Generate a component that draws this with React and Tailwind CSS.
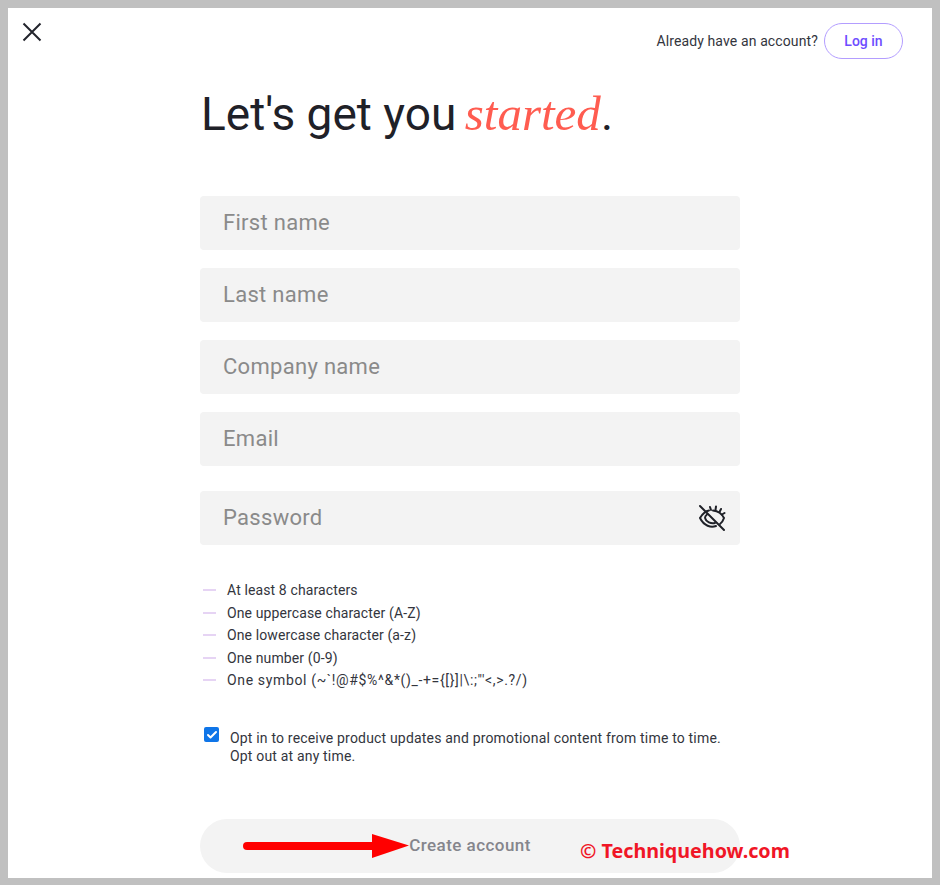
import React from 'react';
import { Check } from 'lucide-react';

const sans = 'font-["Roboto","Liberation_Sans",sans-serif]';

const fields = ['First name', 'Last name', 'Company name', 'Email'];

const rules = [
  'At least 8 characters',
  'One uppercase character (A-Z)',
  'One lowercase character (a-z)',
  'One number (0-9)',
  'One symbol (~`!@#$%^&*()_-+={[}]|\\:;"\'<,>.?/)',
];

function Field({ label, children }) {
  return (
    <div className="flex h-[54px] items-center justify-between rounded-[4px] bg-[#f3f3f3] pl-[23px] pr-[13px] text-[22px] tracking-[0.3px] text-[#8a8a8a]">
      <span className="mb-[2px]">{label}</span>
      {children}
    </div>
  );
}

function EyeOff() {
  return (
    <svg width="30" height="30" viewBox="0 0 30 30" fill="none" stroke="#1f2128" strokeWidth="2" strokeLinecap="round">
      <path d="M3 3 L27 27" />
      <path d="M3 15 C6 10 9 8 12 7.5 M16 7.5 C21 8 25 11 27 15 C26 18 24.5 20 23 21 M19 23 C14 25 7 23 3 15" />
      <path d="M8 15 C9 19 14 21 18 20 M10 11.5 C8.500 12.500 8 14 8 15" />
      <path d="M13 4 L14 7 M19 3.500 L18.500 7 M24 6 L22.500 9 M27.500 10 L25 11.500" />
    </svg>
  );
}

export default function App() {
  return (
    <div className={`${sans} h-[885px] w-[940px] overflow-hidden bg-[#c0c0c0] pb-[7px] pl-2 pr-2 pt-2`}>
      <div className="relative h-full bg-white">
        {/* Top bar */}
        <div className="flex items-start justify-between pl-[14px] pr-[29px] pt-[15px]">
          <svg width="20" height="20" viewBox="0 0 20 20" className="mt-[-1px]" fill="none" stroke="#22242c" strokeWidth="2">
            <path d="M1.500 1.500 L18.500 18.500 M18.500 1.500 L1.500 18.500" />
          </svg>
          <div className="flex items-center gap-[6px]">
            <span className="text-[14px] tracking-[0.12px] text-[#33353d]">Already have an account?</span>
            <button className="h-[36px] w-[79px] rounded-full border border-[#b39dff] text-[14px] font-medium text-[#6e4dff]">
              Log in
            </button>
          </div>
        </div>

        {/* Form */}
        <div className="ml-[192px] w-[540px]">
          <h1 className="ml-px mt-[20px] h-[70px] text-[46px] leading-[70px] text-[#1f2128]">
            Let's get you{' '}
            <span className="ml-[-3px] font-['Liberation_Serif',serif] text-[49px] italic text-[#ff5c50]">started</span>.
          </h1>

          <div className="mt-[47px] flex flex-col gap-[18px]">
            {fields.map((f) => (
              <Field key={f} label={f} />
            ))}
          </div>

          <div className="mt-[25px]">
            <Field label="Password">
              <EyeOff />
            </Field>
          </div>

          <ul className="mt-[35px] flex flex-col gap-[2.5px] text-[14px] leading-[20px] tracking-[0.12px] text-[#33353d]">
            {rules.map((r) => (
              <li key={r} className="flex items-center gap-[11px] pl-[3px] last:tracking-[0.65px]">
                <span className="h-[2px] w-[13px] bg-[#e6d4f4]" />
                <span>{r}</span>
              </li>
            ))}
          </ul>

          <div className="ml-[4px] mt-[37px] flex items-start gap-[11px]">
            <span className="flex h-[15px] w-[15px] items-center justify-center rounded-[2px] bg-[#0f75e8]">
              <Check size={12} strokeWidth={4} color="white" />
            </span>
            <p className="mt-[2px] text-[14px] leading-[18px] tracking-[0.18px] text-[#33353d]">
              Opt in to receive product updates and promotional content from time to time.
              <br />
              Opt out at any time.
            </p>
          </div>

          <button className="mt-[54px] flex h-[54px] w-full items-center justify-center rounded-full bg-[#f3f3f3] text-[17px] font-medium tracking-[0.45px] text-[#85858c]">
            Create account
          </button>
        </div>

        {/* Annotation laid over the screenshot */}
        <svg className="absolute left-[235px] top-[824px]" width="170" height="28" viewBox="0 0 170 28">
          <path d="M4 14 L132 14" stroke="#ff0000" strokeWidth="8" strokeLinecap="round" />
          <path d="M129 2 L166 13.500 L129 26 Z" fill="#ff0000" />
        </svg>
        <span className="absolute left-[572px] top-[828px] font-['Noto_Sans',sans-serif] text-[19.7px] font-bold leading-[30px] text-[#f01626]">
          © Techniquehow.com
        </span>
      </div>
    </div>
  );
}
